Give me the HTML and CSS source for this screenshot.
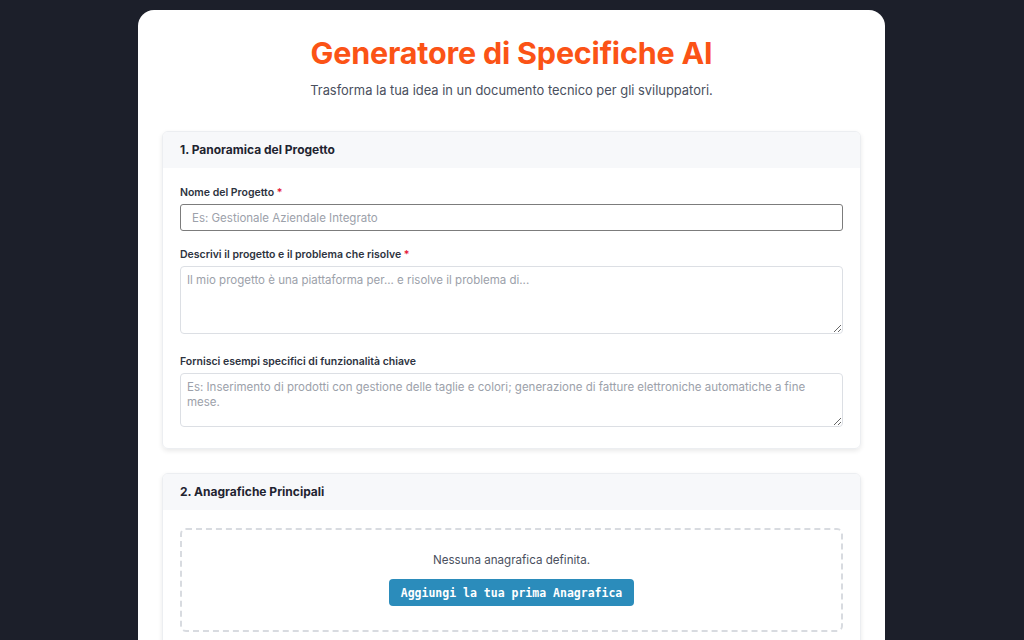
FILE: index.html
```html
<!DOCTYPE html>
<html lang="it">
<head>
    <meta charset="UTF-8">
    <meta name="viewport" content="width=device-width, initial-scale=1.0">
    <title>Generatore di Specifiche AI</title>
    <link rel="stylesheet" href="styles.css">
</head>
<body>
    <div class="container">
        <h1>Generatore di Specifiche AI</h1>
        <p class="subtitle">Trasforma la tua idea in un documento tecnico per gli sviluppatori.</p>

        <div class="section">
            <div class="section-header">1. Panoramica del Progetto</div>
            <div class="section-body">
                <div class="form-group">
                    <label for="name">Nome del Progetto <span class="req">*</span></label>
                    <input type="text" id="name" class="input-main" placeholder="Es: Gestionale Aziendale Integrato">
                </div>
                <div class="form-group tall-group">
                    <label for="desc">Descrivi il progetto e il problema che risolve <span class="req">*</span></label>
                    <textarea id="desc" class="tall" placeholder="Il mio progetto è una piattaforma per... e risolve il problema di..."></textarea>
                </div>
                <div class="form-group">
                    <label for="examples">Fornisci esempi specifici di funzionalità chiave</label>
                    <textarea id="examples" class="short" placeholder="Es: Inserimento di prodotti con gestione delle taglie e colori; generazione di fatture elettroniche automatiche a fine mese."></textarea>
                </div>
            </div>
        </div>

        <div class="section">
            <div class="section-header">2. Anagrafiche Principali</div>
            <div class="section-body">
                <div class="empty">
                    <p>Nessuna anagrafica definita.</p>
                    <button type="button">Aggiungi la tua prima Anagrafica</button>
                </div>
            </div>
        </div>
    </div>
</body>
</html>
```

FILE: styles.css
```css
body {
    font-family: 'Inter', 'Noto Sans', sans-serif;
    margin: 0;
    padding: 10px 0 0;
    background: #1c1f2a;
    color: #2d3340;
    display: flex;
    justify-content: center;
    height: 630px;
    overflow: hidden;
}

.container {
    background: #fff;
    border-radius: 16px 16px 0 0;
    padding: 25px 24px;
    width: 699px;
    margin-left: -1px;
    text-align: center;
}

h1 {
    font-size: 30.5px;
    line-height: 36px;
    margin: 0;
    color: #fb5316;
    font-weight: 700;
    letter-spacing: -0.2px;
}

.subtitle {
    font-size: 12.9px;
    line-height: 20px;
    margin: 10px 0 30px;
    color: #4a505e;
}

.section {
    border: 1px solid #eceef1;
    border-radius: 6px;
    box-shadow: 0 2px 5px rgba(0, 0, 0, 0.09);
    text-align: left;
    margin-bottom: 24px;
    overflow: hidden;
}

.section-header {
    background: #f7f8fa;
    padding: 10px 17px;
    font-size: 12px;
    line-height: 16px;
    font-weight: 700;
    color: #1f2430;
}

.section-body {
    padding: 18px 17px 21px;
}

.form-group {
    margin-bottom: 17px;
}

.form-group.tall-group {
    margin-bottom: 21px;
}

.form-group:last-child {
    margin-bottom: 0;
}

label {
    display: block;
    font-size: 10.5px;
    line-height: 14px;
    font-weight: 600;
    margin-bottom: 4px;
    color: #2d3340;
}

.req {
    color: #e5193a;
}

input, textarea {
    display: block;
    width: 100%;
    box-sizing: border-box;
    font-family: inherit;
    font-size: 11.5px;
    color: #2d3340;
    margin: 0;
}

input::placeholder, textarea::placeholder {
    color: #9ca1aa;
}

.input-main {
    height: 27px;
    padding: 5px 11px;
    border: 1px solid #7c7c7c;
    border-radius: 3px;
}

textarea {
    padding: 6px 6px;
    line-height: 15px;
    border: 1px solid #dcdfe4;
    border-radius: 4px;
    resize: vertical;
}

.tall {
    height: 68px;
}

.short {
    height: 54px;
}

.empty {
    border: 2px dashed #d8dbe0;
    border-radius: 6px;
    padding: 20px 0 24px;
    text-align: center;
}

.empty p {
    margin: 0 0 9px;
    font-size: 11.6px;
    line-height: 20px;
    color: #4a505e;
}

button {
    background: #2b8cbb;
    color: #fff;
    font-family: 'DejaVu Sans Mono', monospace;
    font-weight: 700;
    font-size: 11.5px;
    height: 27px;
    padding: 0 12px;
    border: none;
    border-radius: 4px;
    cursor: pointer;
}
```
